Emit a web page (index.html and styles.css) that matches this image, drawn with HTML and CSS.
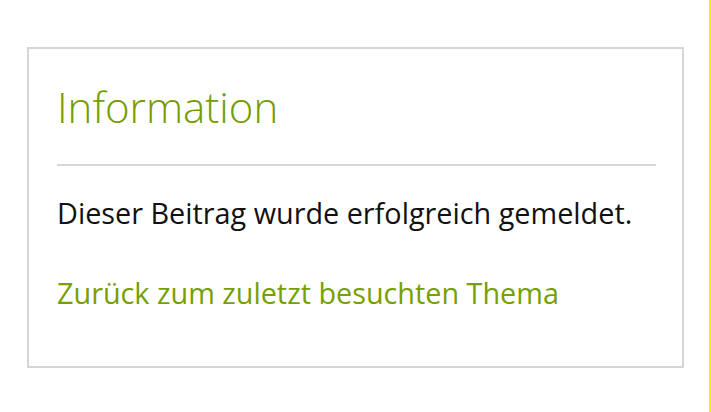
FILE: index.html
```html
<!DOCTYPE html>
<html lang="de">
<head>
<meta charset="utf-8">
<title>Information</title>
<link rel="stylesheet" href="styles.css">
</head>
<body>
<div class="page">
  <div class="panel">
    <h2 class="panel-title">Information</h2>
    <p class="message">Dieser Beitrag wurde erfolgreich gemeldet.</p>
    <a class="back-link" href="#">Zurück zum zuletzt besuchten Thema</a>
  </div>
</div>
</body>
</html>
```
FILE: styles.css
```css
html, body {
  margin: 0;
  padding: 0;
  background: #ffffff;
}
.page {
  box-sizing: border-box;
  width: 711px;
  min-height: 412px;
  padding: 47px 0 0 27px;
  border-right: 2px solid #f5f20a;
  font-family: "Open Sans", "Liberation Sans", sans-serif;
}
.panel {
  box-sizing: border-box;
  width: 657px;
  height: 321px;
  border: 2px solid #d6d6d6;
  padding: 33px 26px 0 28px;
  display: flex;
  flex-direction: column;
  align-items: flex-start;
}
.panel-title {
  align-self: stretch;
  margin: 0;
  font-size: 42px;
  font-weight: 300;
  line-height: 50px;
  color: #749c00;
  padding-bottom: 32px;
  border-bottom: 2px solid #d6d6d6;
}
.message {
  margin: 27px 0 0;
  font-size: 28.8px;
  line-height: 40px;
  color: #111111;
}
.back-link {
  margin-top: 40px;
  font-size: 28.8px;
  line-height: 40px;
  color: #76a000;
  text-decoration: none;
}
```
